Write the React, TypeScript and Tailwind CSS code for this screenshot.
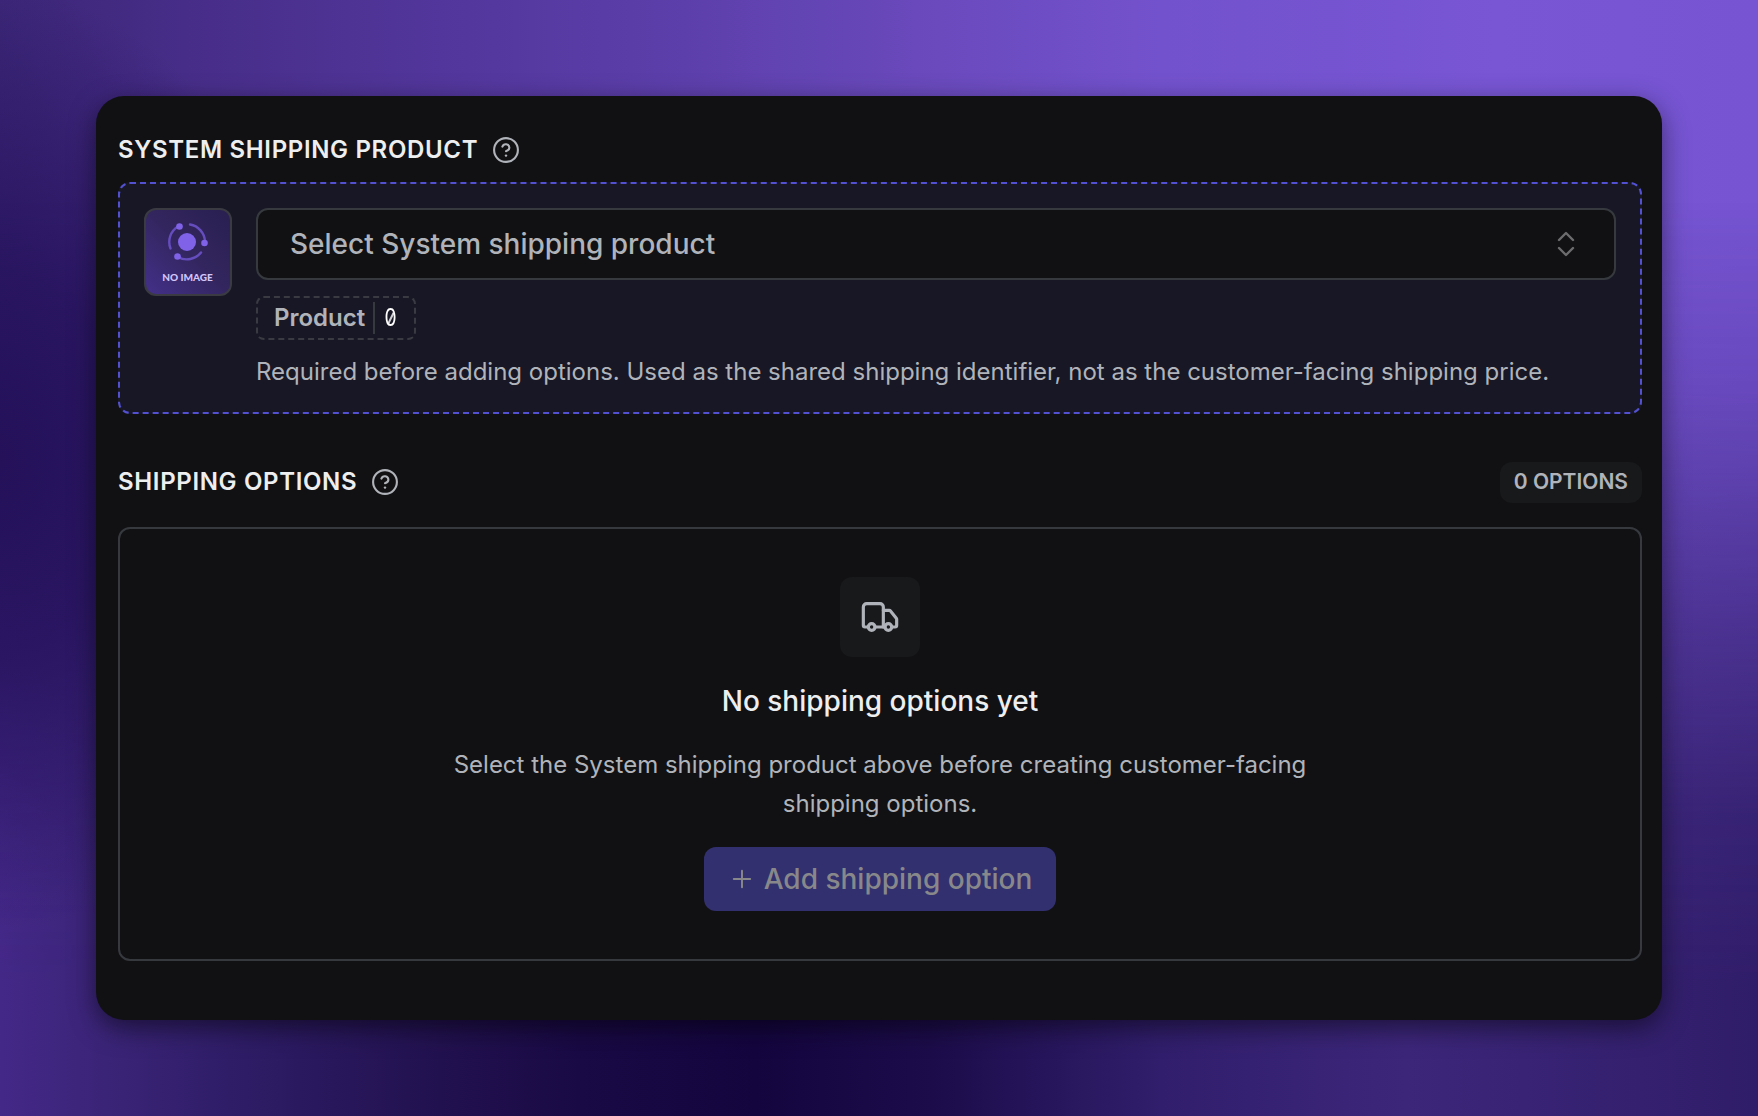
import { Plus, Truck } from 'lucide-react'

function HelpIcon() {
  return (
    <svg className="size-7 text-[#b0b4ba]" viewBox="0 0 24 24" fill="none" stroke="currentColor" strokeWidth="1.8" strokeLinecap="round" strokeLinejoin="round">
      <circle cx="12" cy="12" r="10.2" />
      <path d="M8.9 9.1a3.1 3.1 0 0 1 6 1c0 2-2.9 2.9-2.9 2.9" />
      <path d="M12 16.8h.01" strokeWidth="2.1" />
    </svg>
  )
}

function NoImage() {
  return (
    <div className="flex size-[88px] shrink-0 flex-col items-center rounded-xl border-2 border-[#3a3b42] bg-linear-to-tr from-[#43308a] via-[#33265f] to-[#291f50] pt-[11px] pr-0.5">
      <svg className="size-[42px] shrink-0" viewBox="0 0 42 42" fill="none" stroke="#654dbd" strokeWidth="2.4" strokeLinecap="round">
        <path d="M4.5 27.5A18 18 0 0 1 12 5.5" />
        <path d="M24 3.5a18 18 0 0 1 15 17" />
        <path d="M35 31.5A18 18 0 0 1 12 36" />
        <g fill="#7f62e8" stroke="none">
          <circle cx="21" cy="21" r="9" />
          <circle cx="13.5" cy="5.5" r="3.3" />
          <circle cx="38.5" cy="22" r="3.3" />
          <circle cx="11.5" cy="35.5" r="3.3" />
        </g>
      </svg>
      <span className="mt-2 ml-px font-['Lato',sans-serif] text-[10px] leading-3 font-black whitespace-nowrap text-[#d2c6fb]">NO IMAGE</span>
    </div>
  )
}

function SectionTitle({ children }: { children: string }) {
  return (
    <div className="flex items-center gap-3.5">
      <h2 className="text-2xl leading-9 font-semibold tracking-[0.66px] text-[#edeef0] uppercase">{children}</h2>
      <HelpIcon />
    </div>
  )
}

function Backdrop() {
  return (
    <div className="absolute inset-0 bg-[linear-gradient(to_right,#3b2677_0%,#482e8a_12%,#52369b_25%,#5d3fab_39%,#6949bb_52%,#7352cd_66%,#7856d4_85%,#7654d2_100%)]">
      <div className="absolute inset-0 bg-[linear-gradient(to_right,#442888_0%,#3a2477_6%,#2e1c66_14%,#22114f_25%,#190944_33%,#14053f_43%,#1c0c4a_53%,#311e6c_66%,#3c267a_80%,#301d69_100%)] mask-[linear-gradient(to_bottom,transparent_18%,rgba(0,0,0,0.2)_35%,rgba(0,0,0,0.6)_55%,rgba(0,0,0,0.9)_73%,black_88%)]" />
      <div className="absolute inset-0 bg-[radial-gradient(ellipse_320px_470px_at_0px_460px,#24115a_0%,#24115acc_40%,#24115a00_100%)]" />
    </div>
  )
}

export default function App() {
  return (
    <div className="relative h-[1116px] w-[1758px] p-24 font-['Inter',sans-serif]">
      <Backdrop />
      <div className="relative flex h-[924px] flex-col rounded-[28px] bg-[#111113] pt-9 pr-5 pl-[22px] shadow-[0_8px_26px_rgba(0,0,0,0.5)]">
        <SectionTitle>System shipping product</SectionTitle>

        <div className="mt-3.5 flex h-[232px] gap-6 rounded-xl border-2 border-dashed border-[#5351d1] bg-[#181725] p-6">
          <NoImage />
          <div className="flex flex-1 flex-col items-start">
            <button className="flex h-[72px] w-full shrink-0 items-center justify-between rounded-xl border-2 border-[#363a3f] bg-[#111113] px-8 text-[28px] font-medium text-[#b0b4ba]">
              <span>Select System shipping product</span>
              <svg className="size-8 text-[#6c6c6f]" viewBox="0 0 32 32" fill="none" stroke="currentColor" strokeWidth="2.4" strokeLinecap="round" strokeLinejoin="round">
                <path d="m9 12 7-7 7 7M9 20l7 7 7-7" />
              </svg>
            </button>
            <div className="mt-4 flex h-11 w-40 shrink-0 items-center gap-2 rounded-lg border-2 border-dashed border-[#3a3b42] pl-4 text-2xl font-semibold text-[#b0b4ba]">
              <span>Product</span>
              <span className="h-8 w-0.5 bg-[#363a3f]" />
              <span className="relative flex w-3.5 justify-center font-normal text-white">
                <span className="scale-x-[0.8]">0</span>
                <span className="absolute top-2.5 left-[6.5px] h-3 w-[1.5px] rotate-[26deg] bg-white/80" />
              </span>
            </div>
            <p className="mt-4 text-2xl leading-8 whitespace-nowrap text-[#b0b4ba]">
              Required before adding options. Used as the shared shipping identifier, not as the customer-facing shipping price.
            </p>
          </div>
        </div>

        <div className="mt-12 flex h-10 items-center justify-between">
          <SectionTitle>Shipping options</SectionTitle>
          <span className="flex h-[41px] items-center rounded-xl bg-[#18191b] px-3.5 text-[21px] font-semibold text-[#b0b4ba]">0 OPTIONS</span>
        </div>

        <div className="mt-[25px] flex h-[434px] flex-col items-center rounded-xl border-2 border-[#363a3f] pt-12">
          <div className="flex size-20 items-center justify-center rounded-xl bg-[#18191b] text-[#b0b4ba]">
            <Truck size={40} strokeWidth={1.9} />
          </div>
          <h3 className="mt-6 text-[28px] leading-10 font-medium text-[#edeef0]">No shipping options yet</h3>
          <p className="mt-6 w-[896px] text-center text-2xl leading-[39px] text-[#b0b4ba]">
            Select the System shipping product above before creating customer-facing shipping options.
          </p>
          <button className="mt-6 flex h-16 w-[352px] items-center justify-center gap-2 rounded-xl bg-[#32306f] text-[28px] font-medium text-[#88888a]">
            <Plus size={28} strokeWidth={1.7} />
            Add shipping option
          </button>
        </div>
      </div>
    </div>
  )
}
